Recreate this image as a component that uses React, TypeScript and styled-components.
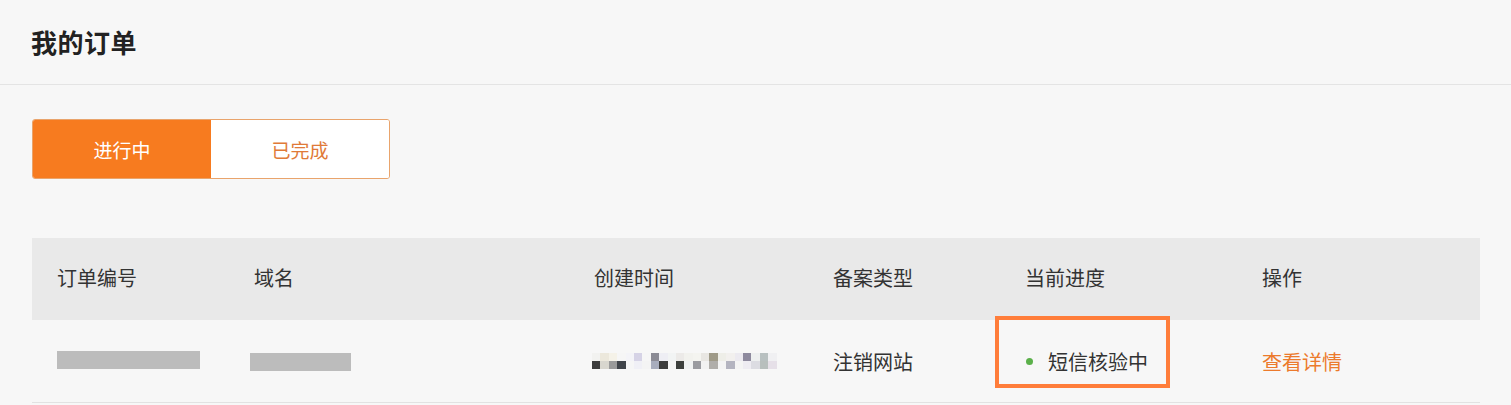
import React from 'react';
import styled, { createGlobalStyle, css } from 'styled-components';

const GlobalStyle = createGlobalStyle`
  html, body {
    margin: 0;
    padding: 0;
    background: #f7f7f7;
  }
  body {
    font-family: "Noto Sans CJK SC", "Noto Sans", "Liberation Sans", sans-serif;
    color: #333;
  }
`;

const Page = styled.div`
  width: 1511px;
  height: 405px;
  overflow: hidden;
  background: #f7f7f7;
`;

const Header = styled.div`
  height: 85px;
  border-bottom: 1px solid #e4e4e4;
  padding-left: 31px;
  display: flex;
  align-items: center;
  box-sizing: border-box;
`;

const Title = styled.h1`
  margin: 0;
  margin-top: -2px;
  font-size: 26px;
  font-weight: 700;
  color: #222;
  letter-spacing: 0.5px;
`;

const Body = styled.div`
  padding: 34px 31px 0 32px;
`;

const Tabs = styled.div`
  display: flex;
  width: 358px;
  height: 60px;
  border-radius: 3px;
  overflow: hidden;
  border: 1px solid #e9a46c;
  box-sizing: border-box;
`;

const Tab = styled.button<{ $active?: boolean }>`
  flex: 1;
  border: none;
  margin: 0;
  padding: 0;
  font-family: inherit;
  font-size: 19px;
  cursor: pointer;
  ${(p) =>
    p.$active
      ? css`
          background: #f77b1f;
          color: #fff;
        `
      : css`
          background: #fff;
          color: #e07a38;
        `}
`;

const Table = styled.div`
  margin-top: 59px;
  width: 1448px;
`;

const cols = '197px 340px 239px 192px 237px 243px';

const HeadRow = styled.div`
  display: grid;
  grid-template-columns: ${cols};
  height: 82px;
  background: #e9e9e9;
  align-items: center;
`;

const Row = styled.div`
  display: grid;
  grid-template-columns: ${cols};
  height: 82px;
  align-items: center;
  border-bottom: 1px solid #e2e2e2;
`;

const Cell = styled.div`
  position: relative;
  padding-left: 25px;
  font-size: 20px;
  color: #333;
  display: flex;
  align-items: center;
  height: 100%;
  box-sizing: border-box;
`;

const HeadCell = styled(Cell)`
  padding-bottom: 3px;
`;

const Blur = styled.div<{ $w: number; $dx?: number; $dy?: number }>`
  width: ${(p) => p.$w}px;
  height: 18px;
  background: #bcbcbc;
  margin-left: ${(p) => p.$dx || 0}px;
  margin-top: ${(p) => p.$dy || 0}px;
`;

const Mosaic = styled.div`
  display: grid;
  grid-template-columns: repeat(22, 8.4px);
  grid-auto-rows: 8px;
  margin-left: -2px;
`;

const Tile = styled.div``;

const StatusDot = styled.span`
  width: 7px;
  height: 7px;
  border-radius: 50%;
  background: #5bb04a;
  margin-right: 15px;
  margin-left: 1px;
`;

const Highlight = styled.div`
  position: absolute;
  left: -5px;
  top: -4px;
  width: 175px;
  height: 72px;
  border: 4px solid #ff7d3a;
  box-sizing: border-box;
  pointer-events: none;
`;

const LinkText = styled.a`
  color: #ec7a2c;
  text-decoration: none;
  font-size: 20px;
  cursor: pointer;
`;

const mosaicTop = [
  '#f2f2f0', '#ece8dc', '#f5f2e8', '#f6f6f6', '#f4f4f8', '#d6d3e6', '#f6f6f6', '#8b8b95',
  '#eeeef4', '#f2f4f4', '#eceae8', '#f2f2ee', '#f4f4f0', '#e8e6e2', '#9f9a88', '#eeeee8',
  '#f2f0ee', '#eceaf0', '#8e8a9e', '#eef0f0', '#b8c0c0', '#f0f0f2',
];
const mosaicBottom = [
  '#3c3c3c', '#d8d6ce', '#9a9a9a', '#40444a', '#f6f6f6', '#f0f0f6', '#f4f4f4', '#a8adbd',
  '#3c3c3c', '#f6f6f6', '#3d403d', '#f0f2f2', '#9a9ba0', '#f2f2f2', '#b0aeaa', '#f4f4f4',
  '#b4b4c0', '#f4f4f4', '#eeecf2', '#dcdce2', '#b8bfbd', '#e6e0e8',
];

const headers = ['订单编号', '域名', '创建时间', '备案类型', '当前进度', '操作'];

const App: React.FC = () => {
  return (
    <Page>
      <GlobalStyle />
      <Header>
        <Title>我的订单</Title>
      </Header>
      <Body>
        <Tabs>
          <Tab $active>进行中</Tab>
          <Tab>已完成</Tab>
        </Tabs>

        <Table>
          <HeadRow>
            {headers.map((h) => (
              <HeadCell key={h}>{h}</HeadCell>
            ))}
          </HeadRow>
          <Row>
            <Cell>
              <Blur $w={143} $dy={-2} />
            </Cell>
            <Cell>
              <Blur $w={101} $dx={-4} $dy={1} />
            </Cell>
            <Cell>
              <Mosaic>
                {[...mosaicTop, ...mosaicBottom].map((c, i) => (
                  <Tile key={i} style={{ background: c }} />
                ))}
              </Mosaic>
            </Cell>
            <Cell>注销网站</Cell>
            <Cell>
              <Highlight />
              <StatusDot />
              短信核验中
            </Cell>
            <Cell>
              <LinkText>查看详情</LinkText>
            </Cell>
          </Row>
        </Table>
      </Body>
    </Page>
  );
};

export default App;
